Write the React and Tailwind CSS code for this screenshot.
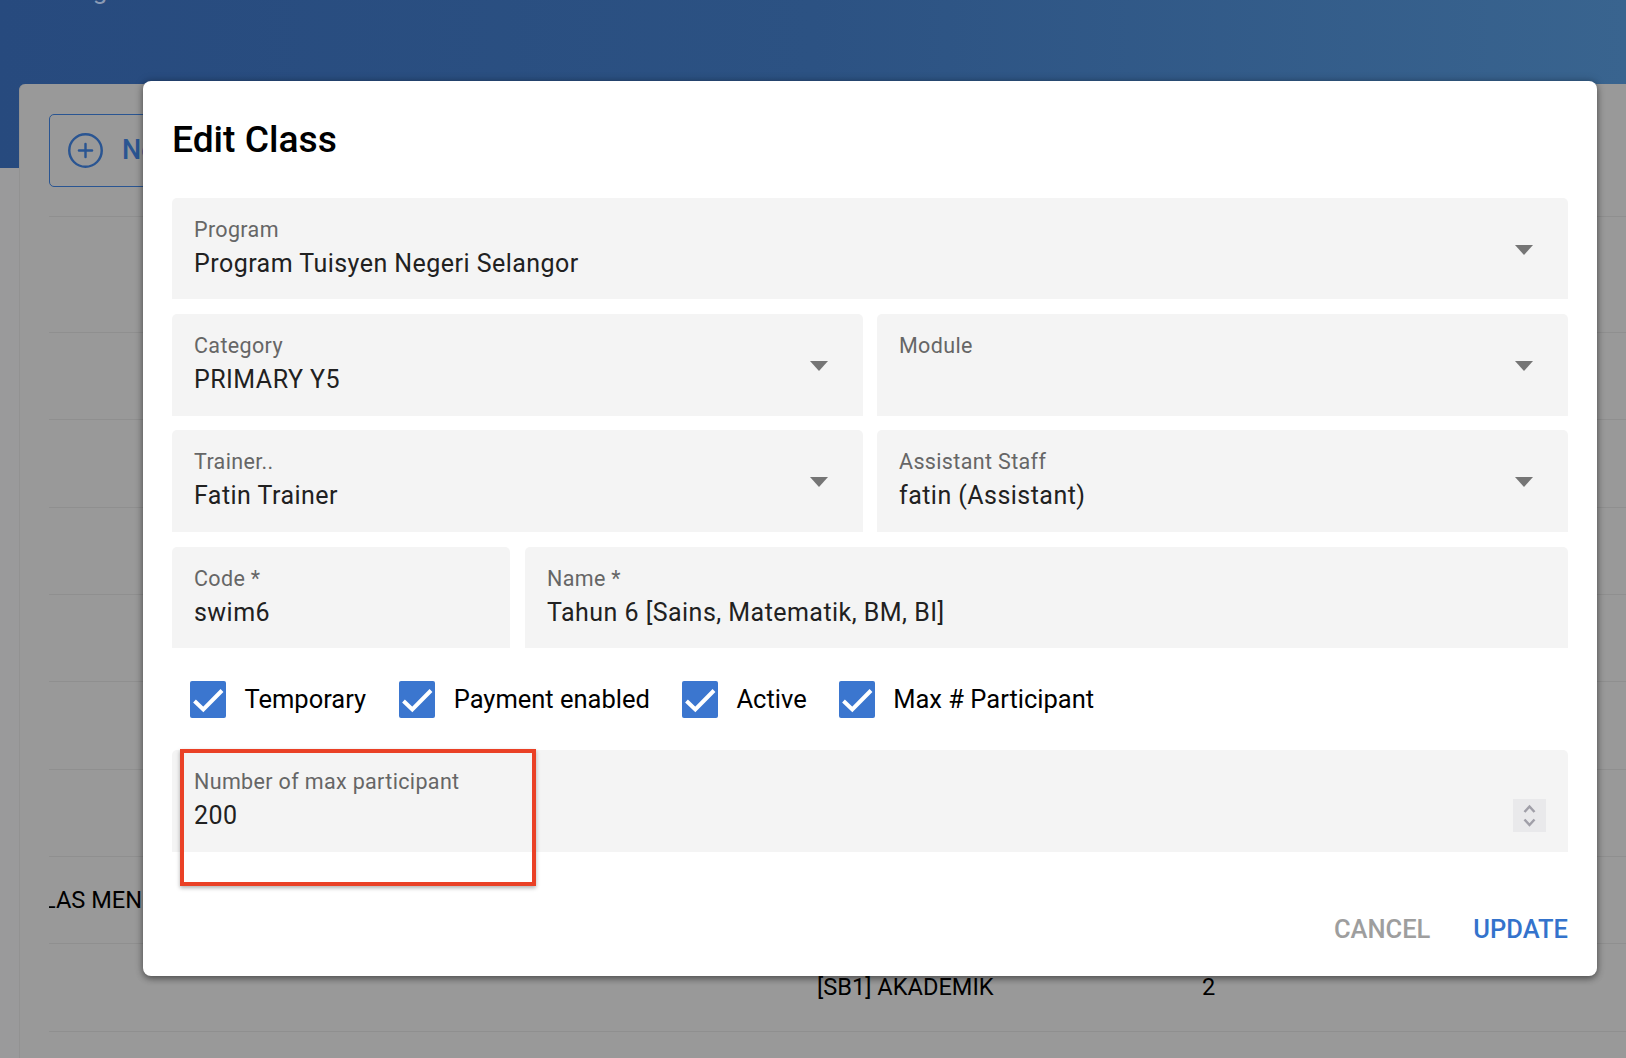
import React from "react";
import { CirclePlus } from "lucide-react";

const font = { fontFamily: "Roboto, sans-serif" };

const rows = [
  { name: "", module: "", count: "" },
  { name: "", module: "", count: "" },
  { name: "", module: "", count: "" },
  { name: "", module: "", count: "" },
  { name: "", module: "", count: "" },
  { name: "", module: "", count: "" },
  { name: "", module: "", count: "" },
  { name: "LAS MENG", module: "", count: "" },
  { name: "", module: "[SB1] AKADEMIK", count: "2" },
  { name: "", module: "", count: "" },
];

const Field = ({ label, value, select, className = "" }) => (
  <div className={`relative rounded-t-[5px] bg-[#f4f4f4] pl-[22px] pt-[20px] ${className}`}>
    <p className="h-[24px] text-[21.5px] leading-[24px] tracking-[0.35px] text-[#666666]">{label}</p>
    <p className="mt-[10px] h-[24px] text-[25px] leading-[24px] tracking-[0.46px] text-[#212121]">{value}</p>
    {select && (
      <span className="absolute right-[35px] top-[47px] h-0 w-0 border-x-[9px] border-t-[10px] border-x-transparent border-t-[#757575]" />
    )}
  </div>
);

const Check = ({ label, className = "" }) => (
  <label className={`flex items-center gap-[18.5px] ${className}`}>
    <span className="h-[37px] w-[36px] rounded-[2px] bg-[#3b76cf]">
      <svg viewBox="0 0 36 37" className="h-[37px] w-[36px]" fill="none" stroke="#ffffff" strokeWidth="4">
        <path d="M4.5 20l8.8 8.5L32 9.5" />
      </svg>
    </span>
    <span className="text-[25.5px] leading-[30px] text-black">{label}</span>
  </label>
);

export default function App() {
  return (
    <div className="relative h-[1058px] w-[1626px] overflow-hidden bg-[#9a9a9b]" style={font}>
      <div className="h-[168px] overflow-hidden bg-gradient-to-r from-[#274a7e] via-[#2c5283] to-[#39648f]">
        <p className="-mt-[25px] pl-[53px] text-[26px] leading-[30px] text-[#8a9ab4]">Program</p>
      </div>

      <main className="-mt-[84px] ml-[19px] h-[974px] rounded-tl-[6px] border-l border-[#929292] bg-[#999999] pl-[29px]">
        <div className="h-[133px] border-b border-[#8f8f8f] pt-[30px]">
          <button className="flex h-[73px] w-[160px] items-center gap-[17px] rounded-[5px] border border-[#2a5592] pl-[16px] text-[27px] font-medium text-[#2a5592]">
            <CirclePlus className="h-[39px] w-[39px]" strokeWidth={1.5} />
            New
          </button>
        </div>
        {rows.map((row, i) => (
          <div
            key={i}
            className={`flex items-center border-b border-[#8f8f8f] text-[23.6px] text-black ${
              i === 0 ? "h-[116px]" : "h-[87.33px]"
            }`}
          >
            <span className="w-[768px] shrink-0 overflow-hidden">
              <span className="-ml-[6px] block h-[28px] leading-[28px]">{row.name}</span>
            </span>
            <span className="w-[385px] shrink-0 pt-[1px]">{row.module}</span>
            <span>{row.count}</span>
          </div>
        ))}
      </main>

      <div className="absolute inset-0 flex items-start pl-[143px] pt-[81px]">
        <section className="h-[895px] w-[1454px] rounded-[8px] bg-white px-[29px] shadow-[0_3px_6px_rgba(0,0,0,0.35),0_0_8px_rgba(0,0,0,0.25)]">
          <h2 className="h-[117px] pt-[37px] text-[37.2px] font-medium leading-[43px] text-black">Edit Class</h2>

          <div className="flex flex-col gap-[14px]">
            <Field label="Program" value="Program Tuisyen Negeri Selangor" select className="mb-[1px] h-[101px]" />
            <div className="flex gap-[14px]">
              <Field label="Category" value="PRIMARY Y5" select className="h-[102px] flex-1" />
              <Field label="Module" value="" select className="h-[102px] flex-1" />
            </div>
            <div className="flex gap-[14px]">
              <Field label="Trainer.." value="Fatin Trainer" select className="h-[102px] flex-1" />
              <Field label="Assistant Staff" value="fatin (Assistant)" select className="h-[102px] flex-1" />
            </div>
            <div className="mt-[1px] flex gap-[15px]">
              <Field label="Code *" value="swim6" className="h-[101px] w-[338px]" />
              <Field label="Name *" value="Tahun 6 [Sains, Matematik, BM, BI]" className="h-[101px] flex-1" />
            </div>
          </div>

          <div className="flex h-[102px] items-center pl-[18px]">
            <Check label="Temporary" className="mr-[33px]" />
            <Check label="Payment enabled" className="mr-[32px]" />
            <Check label="Active" className="mr-[32px]" />
            <Check label="Max # Participant" />
          </div>

          <div className="relative">
            <Field label="Number of max participant" value="200" className="h-[102px]" />
            <div className="absolute right-[22px] top-[49px] h-[33px] w-[33px] bg-[#e9e9eb]">
              <svg viewBox="0 0 33 33" className="h-[33px] w-[33px]" fill="none" stroke="#a09fa8" strokeWidth="2.5">
                <path d="M11.5 13l5-5.5 5 5.5M11.5 20.5l5 5.5 5-5.5" />
              </svg>
            </div>
            <div className="absolute -top-[1px] left-[8px] h-[137px] w-[356px] border-[4px] border-[#ea4126] shadow-[0_2px_4px_rgba(0,0,0,0.3)]" />
          </div>

          <div className="mt-[62px] flex justify-end gap-[43px] text-[25.5px] font-medium leading-[30px]">
            <button className="text-[#9e9e9e]">CANCEL</button>
            <button className="text-[#3473cc]">UPDATE</button>
          </div>
        </section>
      </div>
    </div>
  );
}
